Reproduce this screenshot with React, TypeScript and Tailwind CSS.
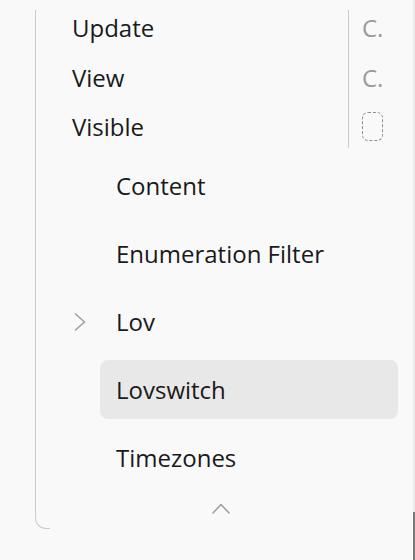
const topRows = [
  { label: 'Update', side: 'C.' },
  { label: 'View', side: 'C.' },
  { label: 'Visible', side: null },
]

const items = [
  { label: 'Content' },
  { label: 'Enumeration Filter' },
  { label: 'Lov', expandable: true },
  { label: 'Lovswitch', active: true },
  { label: 'Timezones' },
]

export default function App() {
  return (
    <div
      className="flex h-[560px] w-[415px] overflow-hidden bg-[#f9f9f9] text-[24px] text-[#1a1a1a]"
      style={{ fontFamily: '"Open Sans", "Noto Sans", sans-serif' }}
    >
      <div className="flex-1 pt-[10px] pl-[35px]">
        {/* tree body */}
        <div className="h-[507px] border-l border-[#cbcbcb]">
          {/* property rows */}
          <div className="flex">
            <div className="flex-1 pl-[36px]">
              {topRows.map((row, i) => (
                <div
                  key={row.label}
                  className={`flex items-center ${i === 0 ? 'h-[43px] pb-[7px]' : 'h-[49px]'}`}
                >
                  {row.label}
                </div>
              ))}
            </div>
            <div className="w-[65px] border-l border-[#cbcbcb] h-[138px] pl-[13px]">
              {topRows.map((row, i) => (
                <div
                  key={row.label}
                  className={`flex items-center ${i === 0 ? 'h-[43px] pb-[7px]' : 'h-[49px]'}`}
                >
                  {row.side ? (
                    <span className="text-[#9a9a9a]">{row.side}</span>
                  ) : (
                    <span className="block w-[21px] h-[29px] rounded-[6px] border border-dashed border-[#8f8f8f]" />
                  )}
                </div>
              ))}
            </div>
          </div>

          {/* child nodes */}
          <div className="mt-[5px] flex flex-col gap-[9px]">
            {items.map((item) => (
              <div key={item.label} className="flex items-center h-[59px]">
                <div className="w-[64px] h-full flex items-center pl-[38px]">
                  {item.expandable && (
                    <svg width="12" height="18" viewBox="0 0 12 18" fill="none">
                      <polyline
                        points="1.5,1 10.5,9 1.5,17"
                        stroke="#9c9c9c"
                        strokeWidth="1.5"
                        strokeLinecap="round"
                        strokeLinejoin="round"
                      />
                    </svg>
                  )}
                </div>
                <div
                  className={`w-[298px] h-full flex items-center px-4 rounded-[8px] ${
                    item.active ? 'bg-[#e8e8e8]' : ''
                  }`}
                >
                  {item.label}
                </div>
              </div>
            ))}
          </div>

          {/* collapse toggle */}
          <div className="h-[42px] flex items-center pl-[176px]">
            <svg width="18" height="11" viewBox="0 0 18 11" fill="none">
              <polyline
                points="1,10 9,1.5 17,10"
                stroke="#9c9c9c"
                strokeWidth="1.5"
                strokeLinecap="round"
                strokeLinejoin="round"
              />
            </svg>
          </div>
        </div>
        <div className="w-[15px] h-[12px] border-l border-b border-[#cbcbcb] rounded-bl-[11px]" />
      </div>

      {/* scrollbar */}
      <div className="w-[2px] flex flex-col">
        <div className="flex-1 bg-[#ececec]" />
        <div className="h-[48px] bg-[#7a7a7a]" />
      </div>
    </div>
  )
}
